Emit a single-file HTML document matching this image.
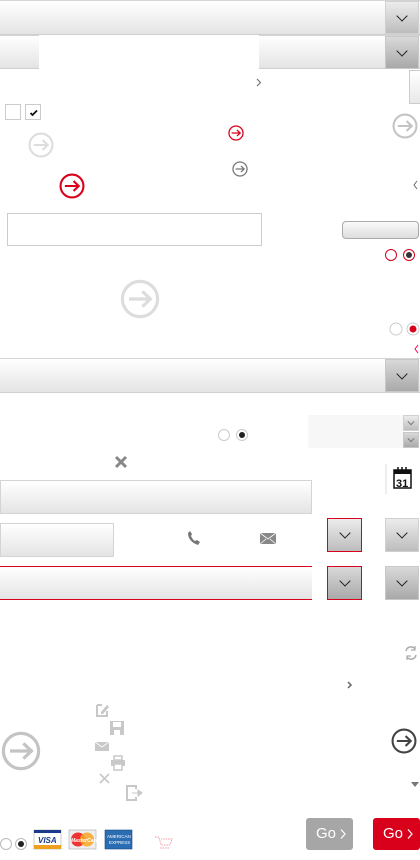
<!DOCTYPE html>
<html><head><meta charset="utf-8"><style>
*{margin:0;padding:0;box-sizing:border-box}
body{width:420px;height:860px;position:relative;background:#fff;overflow:hidden;font-family:"Liberation Sans",sans-serif}
.a{position:absolute}
.bar{position:absolute;background:linear-gradient(#fff,#e4e4e4);border-top:1px solid #d4d4d4;border-bottom:1px solid #cfcfcf}
.btn{position:absolute;background:linear-gradient(#d9d9d9,#a9a9a9);border:1px solid #c8c8c8}
.btn2{position:absolute;background:linear-gradient(#ececec,#bdbdbd);border:1px solid #d0d0d0}
.chev{position:absolute;left:50%;top:50%;width:8px;height:8px;border-right:1.3px solid #222;border-bottom:1.3px solid #222;transform:translate(-50%,-75%) rotate(45deg)}
svg{position:absolute;overflow:visible}
.go{position:absolute;top:818px;width:47px;height:32px;border-radius:3px;color:#fff;font-size:15px;line-height:32px;padding-left:10px}
</style></head><body>

<div class="bar" style="left:0;top:0;width:420px;height:35px"></div>
<div class="btn2" style="left:385px;top:1px;width:34px;height:33px"><div class="chev"></div></div>

<div class="bar" style="left:0;top:35px;width:39px;height:34px"></div>
<div class="bar" style="left:259px;top:35px;width:161px;height:34px"></div>
<div class="btn" style="left:385px;top:36px;width:34px;height:33px"><div class="chev"></div></div>

<svg style="left:256px;top:78px" width="6" height="9"><path d="M1 1l3.5 3.5L1 8" fill="none" stroke="#666" stroke-width="1"/></svg>
<div class="a" style="left:409px;top:70px;width:12px;height:34px;border:1px solid #ccc;background:linear-gradient(#fff,#e8e8e8)"></div>

<div class="a" style="left:5px;top:104px;width:16px;height:16px;border:1px solid #ccc"></div>
<div class="a" style="left:25px;top:104px;width:16px;height:16px;border:1px solid #ccc"></div>
<svg style="left:30px;top:110px" width="8" height="6"><path d="M0.5 3l2 2 4.5-4.5" fill="none" stroke="#111" stroke-width="1.8"/></svg>

<svg style="left:0;top:0" width="420" height="860">
<defs><g id="ar"><circle r="0.88" fill="none" stroke-width="0.16"/><path d="M-0.55 0H0.5M0.12-0.38L0.52 0 0.12 0.38" fill="none" stroke-width="0.16"/></g></defs>
<use href="#ar" transform="translate(236,133) scale(8)" stroke="#d9001b"/>
<use href="#ar" transform="translate(41,145) scale(13)" stroke="#ddd"/>
<use href="#ar" transform="translate(405,126) scale(13)" stroke="#c4c4c4"/>
<use href="#ar" transform="translate(240,169) scale(8)" stroke="#777"/>
<use href="#ar" transform="translate(72,186) scale(13)" stroke="#d9001b"/>
<use href="#ar" transform="translate(140,299) scale(20)" stroke="#ddd"/>
<use href="#ar" transform="translate(21,751) scale(20)" stroke="#c4c4c4"/>
<use href="#ar" transform="translate(404,741) scale(13)" stroke="#444"/>
<circle cx="391" cy="255" r="5.5" fill="#fff" stroke="#d9001b" stroke-width="1"/>
<circle cx="409" cy="255" r="5.5" fill="#fff" stroke="#d9001b" stroke-width="1"/><circle cx="409" cy="255" r="3" fill="#333"/>
<circle cx="396" cy="329" r="6" fill="#fff" stroke="#ccc"/>
<circle cx="413" cy="329" r="6" fill="#fff" stroke="#ccc"/><circle cx="413" cy="329" r="3.5" fill="#d9001b"/>
<circle cx="224" cy="435" r="5.5" fill="#fff" stroke="#ccc"/>
<circle cx="242" cy="435" r="5.5" fill="#fff" stroke="#ccc"/><circle cx="242" cy="435" r="3" fill="#222"/>
<circle cx="6" cy="844" r="5.5" fill="#fff" stroke="#bbb"/>
<circle cx="21" cy="844" r="5.5" fill="#fff" stroke="#bbb"/><circle cx="21" cy="844" r="3" fill="#222"/>
<path d="M417 181l-3 4 3 4" fill="none" stroke="#666"/>
<path d="M418 345l-3 4 3 4" fill="none" stroke="#f06"/>
<path d="M348 682l3 3-3 3" fill="none" stroke="#666" stroke-width="1.5"/>
<path d="M411 782h8l-4 5z" fill="#777"/>
<path d="M116 457l10 10M126 457l-10 10" stroke="#888" stroke-width="3"/>
<path d="M406 651a5 5 0 0 1 9-2M416 655a5 5 0 0 1-9 2" fill="none" stroke="#aaa" stroke-width="1.5"/>
<path d="M415 646v4h-4M407 660v-4h4" fill="none" stroke="#aaa" stroke-width="1.2"/>
<path d="M188 533c0 6 4 10 10 12l2-3-3-2-2 1c-2-1-3-3-4-5l1-2-2-3z" fill="#777"/>
<rect x="260" y="533" width="16" height="11" fill="#888"/><path d="M260 533l8 6 8-6M260 544l6-5M276 544l-6-5" stroke="#fff" fill="none" stroke-width="0.8"/>
<rect x="95" y="742" width="14" height="9" fill="#c8c8c8"/><path d="M95 742l7 5 7-5" stroke="#fff" fill="none" stroke-width="0.8"/>
<path d="M97 705h5M97 705v11h10v-5" fill="none" stroke="#c8c8c8" stroke-width="2"/><path d="M101 712l6-7 2 2-6 7h-2z" fill="#c8c8c8"/>
<rect x="110" y="721" width="14" height="14" fill="#c8c8c8"/><rect x="113" y="722" width="8" height="5" fill="#fff"/><rect x="114" y="730" width="6" height="5" fill="#fff"/>
<rect x="114" y="756" width="8" height="4" fill="none" stroke="#c8c8c8" stroke-width="1.5"/><rect x="111" y="760" width="14" height="6" fill="#c8c8c8"/><rect x="114" y="764" width="8" height="6" fill="#fff" stroke="#c8c8c8" stroke-width="1.5"/>
<path d="M100 774l9 9M109 774l-9 9" stroke="#c8c8c8" stroke-width="1.6"/>
<path d="M136 789v-3h-9v14h9v-3" fill="none" stroke="#c8c8c8" stroke-width="2"/><path d="M132 793h6v-3l4 3-4 3v-3" fill="#c8c8c8" stroke="#c8c8c8"/>
<path d="M386 464v30" stroke="#ddd"/>
<rect x="394" y="470" width="17" height="18" fill="#fff" stroke="#111" stroke-width="1.5"/><rect x="394" y="470" width="17" height="4" fill="#111"/>
<path d="M398 467v5M402 467v5M406 467v5" stroke="#111" stroke-width="1.5"/>
<text x="396" y="487" font-size="11" font-weight="bold" fill="#111" font-family="Liberation Sans">31</text>
<path d="M155 837h4l2 8h9l2-6h-11M160 848h10" fill="none" stroke="#f59aa8" stroke-width="1" stroke-dasharray="1.5 1"/>
</svg>

<div class="a" style="left:7px;top:213px;width:255px;height:33px;border:1px solid #ccc"></div>
<div class="a" style="left:342px;top:221px;width:77px;height:18px;border:1px solid #aaa;border-radius:4px;background:linear-gradient(#fafafa,#ddd)"></div>

<div class="bar" style="left:0;top:358px;width:420px;height:35px"></div>
<div class="btn" style="left:385px;top:359px;width:34px;height:33px"><div class="chev"></div></div>

<div class="a" style="left:308px;top:415px;width:95px;height:33px;background:#f7f7f7"></div>
<div class="btn2" style="left:403px;top:415px;width:16px;height:16px"><div class="chev" style="width:5px;height:5px;border-color:#777;border-width:1px"></div></div>
<div class="btn" style="left:403px;top:432px;width:16px;height:16px"><div class="chev" style="width:5px;height:5px;border-color:#777;border-width:1px"></div></div>

<div class="bar" style="left:0;top:480px;width:312px;height:34px;border:1px solid #d4d4d4"></div>
<div class="bar" style="left:0;top:523px;width:114px;height:34px;border:1px solid #d4d4d4"></div>
<div class="btn2" style="left:327px;top:518px;width:35px;height:34px;border-color:#d9001b"><div class="chev"></div></div>
<div class="btn2" style="left:385px;top:518px;width:34px;height:34px"><div class="chev"></div></div>
<div class="bar" style="left:0;top:566px;width:312px;height:34px;border-top-color:#d9001b;border-bottom-color:#d9001b"></div>
<div class="btn" style="left:327px;top:566px;width:35px;height:34px;border-color:#d9001b"><div class="chev"></div></div>
<div class="btn" style="left:385px;top:566px;width:34px;height:34px"><div class="chev"></div></div>

<svg style="left:34px;top:830px" width="100" height="20">
<rect x="0" y="0" width="27" height="19" fill="#fff" stroke="#aaa" stroke-width="0.6"/><rect x="0" y="0" width="27" height="3" fill="#1a3a8a"/><rect x="0" y="15" width="27" height="4" fill="#f0a020"/>
<text x="4" y="13" font-size="8" font-weight="bold" font-style="italic" fill="#1a3a8a">VISA</text>
<rect x="35" y="0" width="27" height="19" fill="#eee" stroke="#aaa" stroke-width="0.6"/><circle cx="44" cy="9.5" r="7" fill="#e33"/><circle cx="53" cy="9.5" r="7" fill="#f6a623" opacity="0.85"/>
<text x="37" y="12" font-size="5" font-style="italic" font-weight="bold" fill="#fff">MasterCard</text>
<rect x="71" y="0" width="27" height="19" fill="#2a6db3" stroke="#1a4a80" stroke-width="0.6"/><text x="73" y="8" font-size="4.5" fill="#fff">AMERICAN</text><text x="75" y="14" font-size="4.5" fill="#fff">EXPRESS</text>
</svg>

<div class="go" style="left:306px;background:#a6a6a6">Go</div>
<div class="go" style="left:373px;background:#d9001b">Go</div>
<svg style="left:0;top:0" width="420" height="860"><path d="M341 829.5l4 4.5-4 4.5M408 829.5l4 4.5-4 4.5" fill="none" stroke="#fff" stroke-width="1.2"/></svg>

</body></html>
